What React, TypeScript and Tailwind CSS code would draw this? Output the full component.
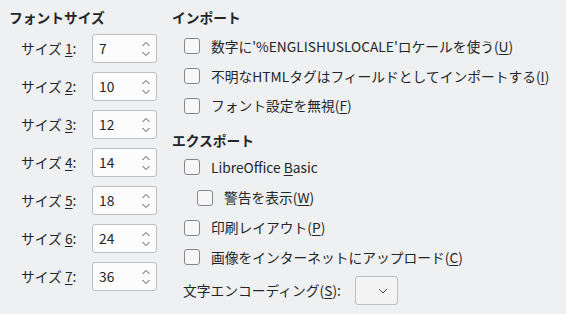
import React from "react";

const font = { fontFamily: '"Noto Sans CJK JP", "Noto Sans", sans-serif' };

function SpinChevrons() {
  return (
    <svg width="10" height="20" viewBox="0 0 10 20" className="text-[#4d4f52]">
      <path d="M1.5 7 L5 3.5 L8.5 7" fill="none" stroke="currentColor" strokeWidth="1" />
      <path d="M1.5 13 L5 16.5 L8.5 13" fill="none" stroke="currentColor" strokeWidth="1" />
    </svg>
  );
}

function Spin({ label, n, value }: { label: string; n: string; value: string }) {
  return (
    <div className="flex items-center h-[29px]">
      <div className="w-[92px] pl-[21px] text-[13.75px] text-[#232629] whitespace-nowrap">
        {label}
        <span className="underline underline-offset-2">{n}</span>:
      </div>
      <div className="w-[65px] h-[29px] rounded-[3px] border border-[#bcbebf] bg-[#fcfcfc] flex items-center pl-[6px] pr-[5px]">
        <span className="flex-1 text-[13.75px] text-[#232629]">{value}</span>
        <SpinChevrons />
      </div>
    </div>
  );
}

function Check({ children, indent = false }: { children: React.ReactNode; indent?: boolean }) {
  return (
    <div className={"flex items-center whitespace-nowrap " + (indent ? "pl-[25px]" : "pl-[12px]")}>
      <div className="w-[16px] h-[16px] rounded-[3px] border border-[#85878a] bg-[#f7f7f8] mr-[11px]" />
      <span className="text-[13.75px] text-[#232629]">{children}</span>
    </div>
  );
}

const U = ({ c }: { c: string }) => <span className="underline underline-offset-2">{c}</span>;

export default function App() {
  return (
    <div className="w-[566px] h-[314px] bg-[#eff0f1] flex overflow-hidden" style={font}>
      <div className="w-[163px] pt-[8px] flex flex-col">
        <div className="pl-[9px] text-[13.75px] font-bold text-[#232629] h-[18px] leading-[18px]">フォントサイズ</div>
        <div className="flex flex-col gap-[9px] mt-[8px]">
          <Spin label="サイズ " n="1" value="7" />
          <Spin label="サイズ " n="2" value="10" />
          <Spin label="サイズ " n="3" value="12" />
          <Spin label="サイズ " n="4" value="14" />
          <Spin label="サイズ " n="5" value="18" />
          <Spin label="サイズ " n="6" value="24" />
          <Spin label="サイズ " n="7" value="36" />
        </div>
      </div>
      <div className="flex-1 pt-[8px] pl-[9px] flex flex-col">
        <div className="text-[13.75px] font-bold text-[#232629] h-[18px] leading-[18px]">インポート</div>
        <div className="flex flex-col">
          <div className="h-[30px] mt-[5px] flex items-center">
            <Check>数字に'%ENGLISHUSLOCALE'ロケールを使う(<U c="U" />)</Check>
          </div>
          <div className="h-[30px] flex items-center">
            <Check>不明なHTMLタグはフィールドとしてインポートする(<U c="I" />)</Check>
          </div>
          <div className="h-[29px] flex items-center">
            <Check>フォント設定を無視(<U c="F" />)</Check>
          </div>
        </div>
        <div className="text-[13.75px] font-bold text-[#232629] h-[18px] leading-[18px] mt-[11px]">エクスポート</div>
        <div className="flex flex-col">
          <div className="h-[30px] mt-[3px] flex items-center">
            <Check>LibreOffice <U c="B" />asic</Check>
          </div>
          <div className="h-[31px] flex items-center">
            <Check indent>警告を表示(<U c="W" />)</Check>
          </div>
          <div className="h-[29px] flex items-center">
            <Check>印刷レイアウト(<U c="P" />)</Check>
          </div>
          <div className="h-[30px] flex items-center">
            <Check>画像をインターネットにアップロード(<U c="C" />)</Check>
          </div>
          <div className="flex items-center mt-[4px] pl-[11px]">
            <span className="text-[13.75px] text-[#232629] w-[172px] whitespace-nowrap">文字エンコーディング(<U c="S" />):</span>
            <div className="w-[43px] h-[29px] rounded-[3px] border border-[#bcbebf] bg-[#f4f4f5] flex items-center justify-end pr-[9px]">
              <svg width="10" height="6" viewBox="0 0 10 6">
                <path d="M1 1 L5 5 L9 1" fill="none" stroke="#4d4f52" strokeWidth="1" />
              </svg>
            </div>
          </div>
        </div>
      </div>
    </div>
  );
}
